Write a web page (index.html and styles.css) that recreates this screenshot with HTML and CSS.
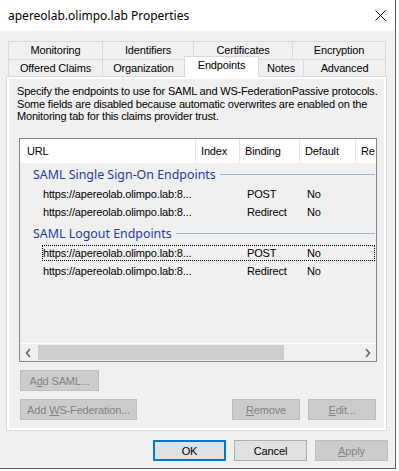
FILE: index.html
```html
<!DOCTYPE html>
<html lang="en">
<head>
    <meta charset="UTF-8">
    <title>apereolab.olimpo.lab Properties</title>
    <link rel="stylesheet" href="styles.css">
</head>
<body>
    <div class="window">
        <div class="titlebar">
            <span class="title">apereolab.olimpo.lab Properties</span>
            <svg class="close" width="11" height="11" viewBox="0 0 11 11">
                <path d="M0.5 0.5 L10.5 10.5 M10.5 0.5 L0.5 10.5" stroke="#000" stroke-width="1" fill="none"/>
            </svg>
        </div>

        <div class="dialog">
            <div class="tabs">
                <div class="tab-row">
                    <div class="tab" style="width: 94px">Monitoring</div>
                    <div class="tab" style="width: 91px">Identifiers</div>
                    <div class="tab" style="width: 99px">Certificates</div>
                    <div class="tab last" style="width: 93px">Encryption</div>
                </div>
                <div class="tab-row front">
                    <div class="tab" style="width: 94px">Offered Claims</div>
                    <div class="tab" style="width: 82px">Organization</div>
                    <div class="tab selected" style="width: 75px">Endpoints</div>
                    <div class="tab" style="width: 45px">Notes</div>
                    <div class="tab last" style="width: 81px">Advanced</div>
                </div>
            </div>

            <div class="panel">
                <div class="page">
                    <p class="desc">Specify the endpoints to use for SAML and WS-FederationPassive protocols.<br>Some fields are disabled because automatic overwrites are enabled on the<br>Monitoring tab for this claims provider trust.</p>

                    <div class="list">
                        <div class="list-head">
                            <div class="col col-url">URL</div>
                            <div class="col col-index">Index</div>
                            <div class="col col-binding">Binding</div>
                            <div class="col col-default">Default</div>
                            <div class="col col-rest">Re</div>
                        </div>

                        <div class="list-body">
                            <div class="group">
                                <div class="group-head"><span>SAML Single Sign-On Endpoints</span></div>
                                <div class="row">
                                    <span class="cell-url">https://apereolab.olimpo.lab:8...</span>
                                    <span class="cell-binding">POST</span>
                                    <span class="cell-default">No</span>
                                </div>
                                <div class="row">
                                    <span class="cell-url">https://apereolab.olimpo.lab:8...</span>
                                    <span class="cell-binding">Redirect</span>
                                    <span class="cell-default">No</span>
                                </div>
                            </div>
                            <div class="group">
                                <div class="group-head"><span>SAML Logout Endpoints</span></div>
                                <div class="row focused">
                                    <span class="cell-url">https://apereolab.olimpo.lab:8...</span>
                                    <span class="cell-binding">POST</span>
                                    <span class="cell-default">No</span>
                                </div>
                                <div class="row">
                                    <span class="cell-url">https://apereolab.olimpo.lab:8...</span>
                                    <span class="cell-binding">Redirect</span>
                                    <span class="cell-default">No</span>
                                </div>
                            </div>
                        </div>

                        <div class="hscroll">
                            <div class="arrow">
                                <svg width="17" height="16" viewBox="0 0 17 16">
                                    <path d="M10 4 L6.5 8 L10 12" stroke="#606060" stroke-width="1.5" fill="none"/>
                                </svg>
                            </div>
                            <div class="track">
                                <div class="thumb"></div>
                            </div>
                            <div class="arrow">
                                <svg width="17" height="16" viewBox="0 0 17 16">
                                    <path d="M7 4 L10.5 8 L7 12" stroke="#606060" stroke-width="1.5" fill="none"/>
                                </svg>
                            </div>
                        </div>
                    </div>

                    <div class="btn-row">
                        <button class="btn disabled btn-saml">A<u>d</u>d SAML...</button>
                    </div>
                    <div class="btn-row">
                        <button class="btn disabled btn-wsfed">Add <u>W</u>S-Federation...</button>
                        <button class="btn disabled btn-small push"><u>R</u>emove</button>
                        <button class="btn disabled btn-small"><u>E</u>dit...</button>
                    </div>
                </div>
            </div>

            <div class="dialog-buttons">
                <button class="btn default">OK</button>
                <button class="btn">Cancel</button>
                <button class="btn disabled"><u>A</u>pply</button>
            </div>
        </div>
    </div>
</body>
</html>
```

FILE: styles.css
```css
body {
    margin: 0;
    padding: 0;
    background-color: #fff;
    font-family: "Liberation Sans", Arial, sans-serif;
    font-size: 11px;
    letter-spacing: -0.15px;
    color: #000;
}

.window {
    width: 395px;
    height: 468px;
    background-color: #f0f0f0;
    border-right: 1px solid #5c5c5c;
    border-bottom: 1px solid #5c5c5c;
    display: flex;
    flex-direction: column;
}

.titlebar {
    height: 31px;
    background-color: #fff;
    display: flex;
    align-items: center;
    padding-left: 8px;
}

.title {
    font-family: "Noto Sans", sans-serif;
    font-size: 12px;
    letter-spacing: 0;
    color: #000;
}

.close {
    margin-left: auto;
    margin-right: 9px;
}

.dialog {
    padding: 10px 8px 0 6px;
}

/* tabs */

.tabs {
    margin-left: 2px;
    width: 378px;
}

.tab-row {
    display: flex;
    height: 18px;
}

.tab-row.front {
    height: 17px;
}

.tab {
    box-sizing: border-box;
    border-top: 1px solid #d9d9d9;
    border-left: 1px solid #d9d9d9;
    background-color: #f0f0f0;
    text-align: center;
    line-height: 17px;
    white-space: nowrap;
}

.tab.last {
    border-right: 1px solid #d9d9d9;
    flex: 1;
}

.tab-row.front .tab {
    line-height: 16px;
}

.tab.selected {
    position: relative;
    z-index: 1;
    background-color: #fff;
    border-right: 1px solid #d9d9d9;
    margin-top: -3px;
    height: 21px;
    line-height: 17px;
    margin-right: -1px;
}

/* panel */

.panel {
    height: 355px;
    box-sizing: border-box;
    border: 1px solid #d9d9d9;
    background-color: #fff;
    padding: 2px;
}

.page {
    height: 100%;
    background-color: #f0f0f0;
    padding-top: 6px;
    box-sizing: border-box;
}

.desc {
    margin: 0 0 0 8px;
    height: 38px;
    line-height: 12.5px;
    letter-spacing: -0.19px;
    white-space: nowrap;
}

/* list view */

.list {
    margin: 15px 0 0 10px;
    width: 358px;
    height: 224px;
    box-sizing: border-box;
    border: 1px solid #828790;
    display: flex;
    flex-direction: column;
    overflow: hidden;
}

.list-head {
    display: flex;
    height: 24px;
    background-color: #fff;
    flex-shrink: 0;
}

.col {
    box-sizing: border-box;
    border-right: 1px solid #e5e5e5;
    line-height: 24px;
    padding-left: 5px;
    white-space: nowrap;
}

.col-url {
    width: 176px;
    padding-left: 7px;
}

.col-index {
    width: 44px;
}

.col-binding {
    width: 60px;
}

.col-default {
    width: 56px;
}

.col-rest {
    flex: 1;
    border-right: none;
    overflow: hidden;
}

.list-body {
    flex: 1;
    padding-top: 3px;
}

.group {
    display: flex;
    flex-direction: column;
}

.group + .group {
    margin-top: 4px;
}

.group-head {
    display: flex;
    align-items: center;
    height: 16px;
    padding-left: 13px;
    margin-bottom: 3px;
    margin-right: 1px;
    font-family: "Noto Sans", sans-serif;
    font-size: 12.4px;
    letter-spacing: 0;
    color: #1e3c9e;
    white-space: nowrap;
}

.group-head::after {
    content: "";
    flex: 1;
    height: 1px;
    margin-left: 4px;
    background-color: #a3b1d3;
}

.row {
    display: flex;
    height: 16px;
    box-sizing: border-box;
    margin: 1px 1px 1px 22px;
    border: 1px dotted transparent;
    line-height: 14px;
    white-space: nowrap;
}

.row.focused {
    border-color: #000;
}

.cell-url {
    width: 197px;
}

.cell-binding {
    width: 60px;
    padding-left: 7px;
    box-sizing: border-box;
}

.cell-default {
    padding-left: 7px;
}

.hscroll {
    display: flex;
    height: 17px;
    border-top: 1px solid #fff;
    flex-shrink: 0;
}

.arrow {
    width: 17px;
    display: flex;
    align-items: center;
}

.track {
    flex: 1;
    padding: 1px 75px 1px 1px;
}

.thumb {
    height: 15px;
    background-color: #cdcdcd;
}

/* buttons */

.btn-row {
    display: flex;
    gap: 8px;
    margin-top: 8px;
    padding: 0 8px 0 11px;
}

.btn {
    box-sizing: border-box;
    width: 73px;
    height: 21px;
    padding: 0;
    border: 1px solid #adadad;
    background-color: #e1e1e1;
    font-family: "Liberation Sans", Arial, sans-serif;
    font-size: 11px;
    letter-spacing: -0.15px;
    color: #000;
}

.btn.disabled {
    border-color: #bfbfbf;
    background-color: #cccccc;
    color: #838383;
}

.btn.default {
    border: 2px solid #0078d7;
}

.btn-saml {
    width: 79px;
}

.btn-wsfed {
    width: 117px;
}

.btn-small {
    width: 68px;
}

.push {
    margin-left: auto;
}

.dialog-buttons {
    display: flex;
    justify-content: flex-end;
    gap: 8px;
    margin-top: 9px;
    margin-right: -1px;
}
```
